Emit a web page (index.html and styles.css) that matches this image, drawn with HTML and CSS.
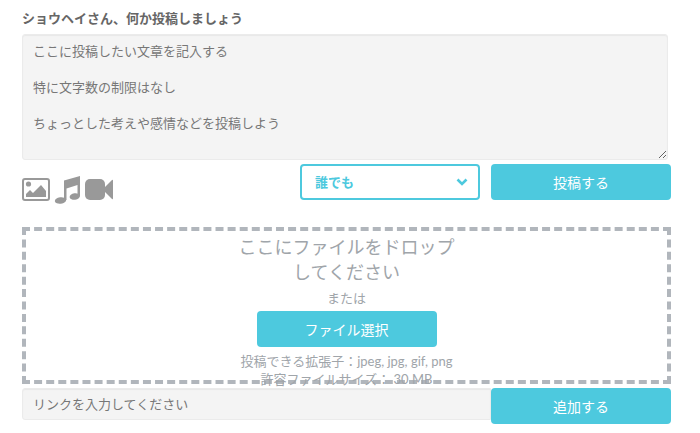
FILE: index.html
```html
<!DOCTYPE html>
<html lang="ja">
<head>
  <meta charset="UTF-8" />
  <meta name="viewport" content="width=device-width, initial-scale=1.0" />
  <title>投稿</title>
  <link rel="stylesheet" href="styles.css">
</head>
<body>
  <form class="post-form">
    <label class="title" for="postText">ショウヘイさん、何か投稿しましょう</label>
    <textarea id="postText" class="post-text" placeholder="ここに投稿したい文章を記入する

特に文字数の制限はなし

ちょっとした考えや感情などを投稿しよう"></textarea>

    <div class="toolbar">
      <div class="media">
        <button type="button" class="icon-button" aria-label="画像">
          <svg width="28" height="32" viewBox="0 0 28 32">
            <rect x="1" y="7" width="26" height="21" rx="2" fill="none" stroke="#999" stroke-width="2" />
            <circle cx="6.500" cy="12" r="2.600" fill="#999" />
            <path d="M4 25v-3l4-4 3 3 8-8 5 6v6z" fill="#999" />
          </svg>
        </button>
        <button type="button" class="icon-button" aria-label="音楽">
          <svg width="26" height="32" viewBox="0 0 26 32">
            <path d="M10 8.500L26 4V24H23.500V13L12.500 16.500V28H10z" fill="#999" />
            <ellipse cx="6.500" cy="28.500" rx="5.700" ry="3.200" fill="#999" transform="rotate(-8 6.500 28.500)" />
            <ellipse cx="20.800" cy="24.500" rx="5.200" ry="3.200" fill="#999" transform="rotate(-8 20.800 24.500)" />
          </svg>
        </button>
        <button type="button" class="icon-button" aria-label="動画">
          <svg width="30" height="32" viewBox="0 0 30 32">
            <rect x="1" y="7" width="20" height="21" rx="5" fill="#999" />
            <path d="M20 16L28 8Q29 7 29 9V26Q29 28 28 27L20 19z" fill="#999" />
          </svg>
        </button>
      </div>
      <div class="select-wrap">
        <select class="privacy" aria-label="公開範囲">
          <option>誰でも</option>
        </select>
        <svg class="arrow" width="12" height="8" viewBox="0 0 12 8">
          <path d="M1.500 1.500L6 6l4.500-4.500" fill="none" stroke="#4dc9de" stroke-width="2.600" />
        </svg>
      </div>
      <button type="submit" class="button">投稿する</button>
    </div>

    <div class="dropzone">
      <p class="drop-title">ここにファイルをドロップ<br>してください</p>
      <p class="drop-or">または</p>
      <button type="button" class="button">ファイル選択</button>
      <p class="drop-note">投稿できる拡張子：jpeg, jpg, gif, png<br>許容ファイルサイズ： 30 MB</p>
    </div>

    <div class="link-row">
      <input type="text" class="link-input" aria-label="リンク" placeholder="リンクを入力してください">
      <button type="button" class="button">追加する</button>
    </div>
  </form>
</body>
</html>
```

FILE: styles.css
```css
* {
  box-sizing: border-box;
}
body {
  margin: 0;
  padding: 9px 29px 8px 22px;
  background: #fff;
  color: #666;
}
body, button, input, select, textarea {
  font-family: Lato, 'Noto Sans CJK JP', sans-serif;
  font-size: 13px;
  line-height: 18px;
}
.title {
  display: block;
  margin-bottom: 7px;
  font-weight: bold;
}
.post-text,
.link-input {
  border: 1px solid #ebebeb;
  border-radius: 3px;
  background: #f4f4f4;
  box-shadow: inset 0 1px 1px #e8e8e8;
  color: #777;
}
.post-text {
  display: block;
  width: calc(100% - 3px);
  height: 126px;
  padding: 7px 10px;
}
::placeholder {
  color: #777;
  opacity: 1;
}
.toolbar {
  display: flex;
  margin-top: 4px;
}
.media {
  display: flex;
  gap: 4px;
  flex: 1;
  padding-top: 8px;
}
.icon-button {
  padding: 0;
  border: 0;
  background: none;
  height: 32px;
}
.icon-button svg {
  display: block;
}
.select-wrap {
  position: relative;
  width: 180px;
  margin-right: 11px;
}
.privacy {
  appearance: none;
  display: block;
  width: 100%;
  height: 36px;
  padding: 0 13px;
  border: 2px solid #4dc9de;
  border-radius: 4px;
  background: #fff;
  color: #4dc9de;
  font-weight: bold;
}
.arrow {
  position: absolute;
  right: 12px;
  top: 14px;
  pointer-events: none;
}
.button {
  width: 180px;
  height: 36px;
  padding: 2px 0 0;
  border: 0;
  border-radius: 4px;
  background: #4dc9de;
  color: #fff;
  font-size: 14px;
}
/* the note is allowed to run over the bottom border */
.dropzone {
  height: 157px;
  margin-top: 23px;
  padding-top: 4px;
  border: 4px dashed #b1b6bc;
  color: #a0a5aa;
  text-align: center;
}
.dropzone p {
  margin: 0;
}
.dropzone .drop-title {
  margin-bottom: 4px;
  font-size: 18px;
  line-height: 25px;
}
.dropzone .button {
  display: block;
  margin: 4px auto 5px;
}
.link-row {
  display: flex;
  align-items: flex-start;
  margin-top: 4px;
}
.link-input {
  flex: 1;
  min-width: 0;
  height: 32px;
  padding: 0 10px;
  border-radius: 3px 0 0 3px;
}
```
